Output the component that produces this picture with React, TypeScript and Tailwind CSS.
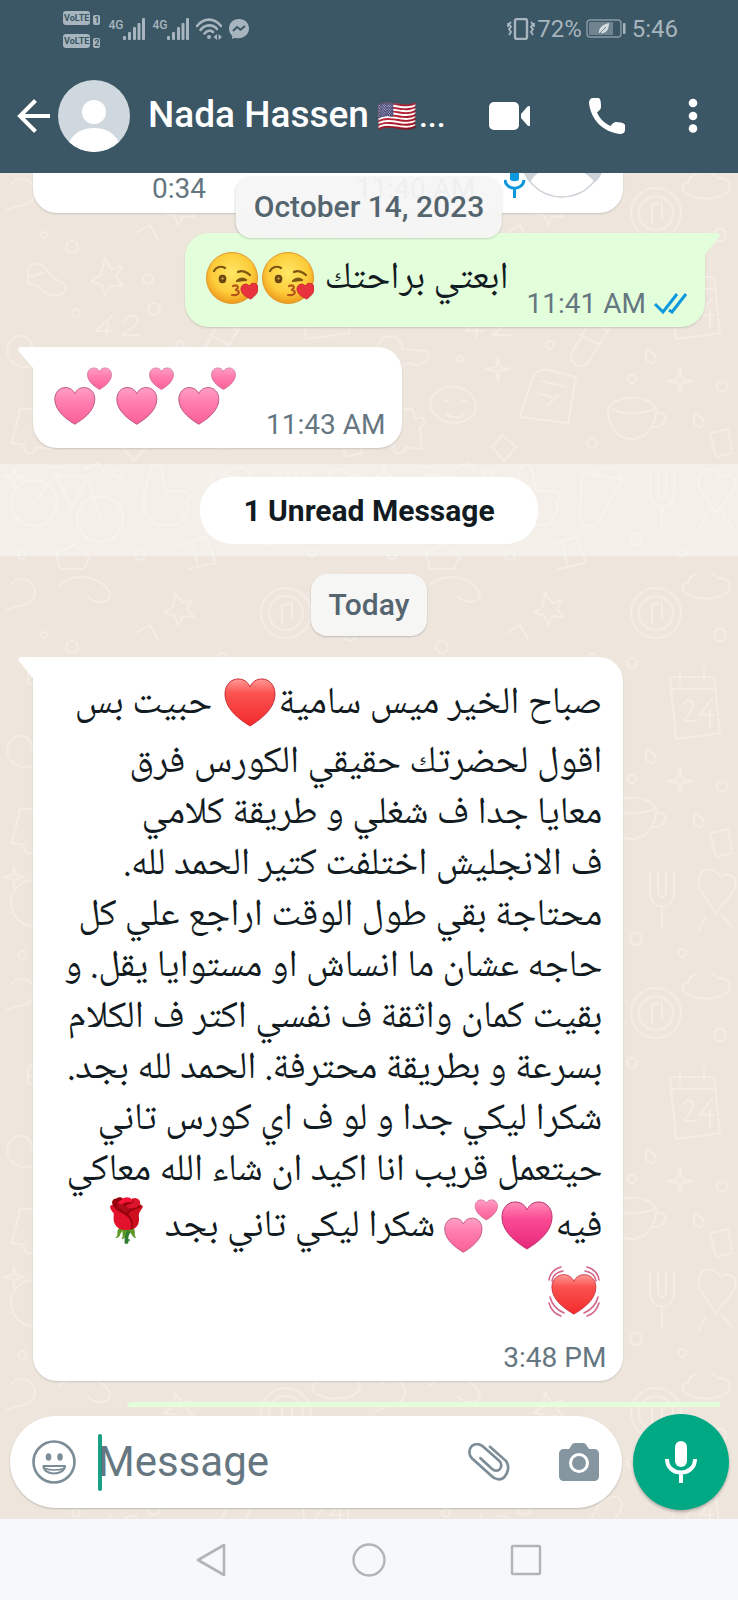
import React from 'react';

type IconProps = {
    className?: string;
};

type HeartTone = "red" | "pink";

const HEART = "M26 49C18 44 1 33 1 17C1 8 7 2 14 2C20 2 24 5 26 10C28 5 32 2 38 2C45 2 51 8 51 17C51 33 34 44 26 49Z";

const HEART_FILL: Record<HeartTone, string> = {
    red: "url(#heart-red)",
    pink: "url(#heart-pink)",
};

const HEART_EDGE: Record<HeartTone, string> = {
    red: "#c9303c",
    pink: "#c0306f",
};

// shared gradients for the emoji drawings
const Gradients = () => (
    <svg width="0" height="0" className="absolute" aria-hidden="true">
        <defs>
            <linearGradient id="heart-red" x1="0" y1="0" x2="0" y2="1">
                <stop offset="0" stopColor="#ff9a96" />
                <stop offset="0.3" stopColor="#fb5350" />
                <stop offset="1" stopColor="#f22a2c" />
            </linearGradient>
            <linearGradient id="heart-pink" x1="0" y1="0" x2="0" y2="1">
                <stop offset="0" stopColor="#ff8db8" />
                <stop offset="0.35" stopColor="#fc4c95" />
                <stop offset="1" stopColor="#e5287a" />
            </linearGradient>
            <linearGradient id="heart-light" x1="0" y1="0" x2="0" y2="1">
                <stop offset="0" stopColor="#ff9fc4" />
                <stop offset="0.4" stopColor="#ff7db0" />
                <stop offset="1" stopColor="#fa6096" />
            </linearGradient>
            <radialGradient id="face" cx="0.5" cy="0.4" r="0.6">
                <stop offset="0" stopColor="#ffe766" />
                <stop offset="0.65" stopColor="#fdcc3a" />
                <stop offset="1" stopColor="#ee9a1c" />
            </radialGradient>
        </defs>
    </svg>
);

const Heart: React.FC<{ tone: HeartTone; label: string }> = ({ tone, label }) => (
    <svg viewBox="0 0 52 52" className="mx-[3px] inline-block size-[52px] align-middle" role="img" aria-label={label}>
        <path d={HEART} fill={HEART_FILL[tone]} stroke={HEART_EDGE[tone]} strokeWidth="1" />
    </svg>
);

const TwoHearts: React.FC<IconProps> = ({ className }) => (
    <svg viewBox="0 0 58 58" className={className} role="img" aria-label="two hearts">
        <g stroke="#b9557c" strokeWidth="1.2">
            <path transform="translate(0 19) scale(.8 .78)" d={HEART} fill="url(#heart-light)" />
            <path transform="translate(33 0) scale(.48 .46)" d={HEART} fill="url(#heart-light)" />
        </g>
    </svg>
);

const BeatingHeart = () => (
    <svg viewBox="0 0 52 52" className="mr-[2px] inline-block size-[52px] align-middle" role="img" aria-label="beating heart">
        <path transform="translate(3 7) scale(.88 .84)" d={HEART} fill="url(#heart-red)" stroke="#c9303c" />
        <g fill="none" stroke="#d4668a" strokeWidth="1.6" strokeLinecap="round">
            <path d="M1 14C2 7 6 3 13 1M4 15C5 9 9 6 15 5M51 14C50 7 46 3 39 1M48 15C47 9 43 6 37 5" />
            <path d="M1 37C3 44 7 48 13 50M2 31C4 39 9 44 16 47M51 37C49 44 45 48 39 50M50 31C48 39 43 44 36 47" />
        </g>
    </svg>
);

const KissFace = () => (
    <svg viewBox="0 0 52 52" className="mx-[2px] inline-block size-[52px] align-middle" role="img" aria-label="face blowing a kiss">
        <circle cx="26" cy="26" r="25.5" fill="url(#face)" stroke="#e09a2b" strokeWidth="1" />
        <g fill="none" stroke="#7d5513" strokeWidth="2.200" strokeLinecap="round">
            <path d="M8 19C10 15 15 13.500 19 16" />
            <path d="M32 20C36 18 41 20 44 23" />
            <path d="M31 29C34 26 37 26 40 28M31 29L39 28" />
            <path d="M27 34C32 32 34 37 29 38C35 38 34 44 26 43" stroke="#b4571d" />
        </g>
        <ellipse cx="16.500" cy="27" rx="3.800" ry="4.200" fill="#6b4410" />
        <circle cx="16.500" cy="26.500" r="1.200" fill="#c79b4f" />
        <path transform="translate(34 32) rotate(-6) scale(.35 .33)" d={HEART} fill="#e8333c" stroke="#b91f2b" strokeWidth="2" />
    </svg>
);

const Signal: React.FC = () => (
    <div className="flex items-start">
        <span className="text-[12px] leading-[14px] font-medium">4G</span>
        <svg viewBox="0 0 22 22" className="h-[22px] w-[22px]" fill="currentColor" aria-hidden="true">
            <rect x="0" y="18" width="3" height="4" rx="1" />
            <rect x="5" y="14" width="3" height="8" rx="1" />
            <rect x="10" y="9" width="3" height="13" rx="1" />
            <rect x="14.500" y="5" width="3" height="17" rx="1" />
            <rect x="19" y="0" width="3" height="22" rx="1" />
        </svg>
    </div>
);

const Volte: React.FC<{ sim: number }> = ({ sim }) => (
    <div className="flex items-end gap-[3px]">
        <span className="h-[14px] rounded-[3px] bg-[#a7b6be] px-px text-[9px] leading-[14px] font-bold text-[#3b5664]">VoLTE</span>
        <span className="h-[10px] rounded-[2px] bg-[#a7b6be] px-px text-[9px] leading-[10px] font-bold text-[#3b5664]">{sim}</span>
    </div>
);

const StatusBar = () => (
    <div className="flex h-[58px] items-center pr-[60px] pl-[63px] text-[#a7b6be]">
        <div className="flex flex-col gap-[9px]">
            <Volte sim={1} />
            <Volte sim={2} />
        </div>
        <div className="ml-2 flex items-center gap-[7px]">
            <Signal />
            <Signal />
            <svg viewBox="0 0 26 22" className="h-[22px] w-[26px]" fill="none" stroke="currentColor" strokeWidth="2.600" aria-hidden="true">
                <path d="M1 8C8 -0.500 18 -0.500 25 8M4.500 12C9 6 17 6 21 11M8.500 15.500C11 12 15 12 17 14" strokeLinecap="round" />
                <circle cx="13" cy="19" r="2" fill="currentColor" stroke="none" />
                <path d="M21 16V22L17.500 19ZM22.500 16V22L26 19Z" fill="currentColor" stroke="none" />
            </svg>
            <svg viewBox="0 0 20 20" className="size-5" aria-hidden="true">
                <path fill="currentColor" d="M10 0C4 0 0 4.200 0 9.600C0 12.500 1.200 15 3.200 16.700V20L6 18.700C13 20.800 20 16.500 20 9.600C20 4.200 16 0 10 0Z" />
                <path d="M4 12L8 8L11.500 10.800L16 7" fill="none" stroke="#3b5664" strokeWidth="2" />
            </svg>
        </div>
        <div className="ml-auto flex items-center">
            <svg viewBox="0 0 28 22" className="h-[22px] w-[28px]" fill="none" stroke="currentColor" strokeWidth="2" aria-hidden="true">
                <rect x="8" y="1" width="12" height="20" rx="2" strokeWidth="2.400" />
                <path d="M4 4L2 6L4 9L2 11L4 14L2 17M24 4L26 6L24 9L26 11L24 14L26 17M1 5V9M27 5V9" strokeWidth="1.800" />
            </svg>
            <span className="ml-[2px] text-[24px] leading-7">72%</span>
            <svg viewBox="0 0 40 20" className="ml-1 h-5 w-10" aria-hidden="true">
                <rect x="1" y="1" width="34" height="17" rx="3" fill="none" stroke="#8a9ba4" strokeWidth="1.400" />
                <rect x="3" y="3" width="24" height="13" fill="#70848f" />
                <path d="M13 15C12 8 18 5 23 4C23 11 20 15 14 14Z" fill="#d4dce0" />
                <path d="M12 16L20 8" stroke="#70848f" />
                <rect x="37" y="4" width="2.500" height="11" rx="1" fill="currentColor" />
            </svg>
            <span className="ml-[6px] text-[24px] leading-7">5:46</span>
        </div>
    </div>
);

const AppBar = () => (
    <div className="flex h-[115px] items-center pr-[41px] pl-[17px] text-white">
        <button type="button" aria-label="Back">
            <svg viewBox="0 0 33 34" className="h-[34px] w-[33px]" fill="none" stroke="currentColor" strokeWidth="4">
                <path d="M33 17H3M18.500 1.500L3 17L18.500 32.500" />
            </svg>
        </button>
        <svg viewBox="0 0 72 72" className="ml-2 size-[72px] shrink-0" role="img" aria-label="Profile photo">
            <clipPath id="avatar"><circle cx="36" cy="36" r="36" /></clipPath>
            <g clipPath="url(#avatar)">
                <rect width="72" height="72" fill="#d0d8df" />
                <circle cx="36" cy="32" r="12" fill="#fff" />
                <path d="M10 64C16 52 25 48 36 48C47 48 56 52 62 64V76H10Z" fill="#fff" />
            </g>
        </svg>
        <h1 className="ml-[18px] flex items-baseline text-[37px] leading-10 font-medium whitespace-nowrap">
            Nada Hassen<span className="ml-2 text-[32px]">🇺🇸</span><span className="ml-[2px] text-[32px]">...</span>
        </h1>
        <div className="ml-auto flex items-center">
            <button type="button" aria-label="Video call">
                <svg viewBox="0 0 42 28" className="h-[28px] w-[42px]" fill="currentColor">
                    <rect x="0" y="0" width="30" height="28" rx="5" />
                    <path d="M32 12L38.500 4.500C40 3.500 41 4 41 5V23C41 24 40 24.500 38.500 23.500L32 16Z" />
                </svg>
            </button>
            <button type="button" aria-label="Voice call" className="ml-[58px]">
                <svg viewBox="0 0 36 36" className="size-9" fill="currentColor">
                    <path d="M4 0H9C11 0 12 2 12 9C12 11 10.500 12.500 8 14.500C11 21 15 25 21.500 28C24 25 25 24 27 24C34 24.500 36 25.500 36 27.500V32C36 34.500 34 36 31 36C14 34 2 22 0 5C0 2 1.500 0 4 0Z" />
                </svg>
            </button>
            <button type="button" aria-label="More options" className="ml-[64px]">
                <svg viewBox="0 0 8 34" className="h-[34px] w-2 overflow-visible" fill="currentColor">
                    <circle cx="4" cy="4" r="4.300" />
                    <circle cx="4" cy="17" r="4.300" />
                    <circle cx="4" cy="29.500" r="4.300" />
                </svg>
            </button>
        </div>
    </div>
);

// doodle wallpaper behind the conversation
const Wallpaper = () => (
    <svg className="absolute inset-0 -z-10 h-full w-full" aria-hidden="true">
        <defs>
            <pattern id="doodles" width="370" height="400" patternUnits="userSpaceOnUse">
                <g fill="none" stroke="#f4ede5" strokeWidth="2" strokeLinecap="round" strokeLinejoin="round">
                    <path d="M105 85L111 96L122 93L116 104L123 113L111 113L105 123L102 112L91 108L101 102Z" />
                    <path d="M28 96C34 88 44 90 48 99C55 110 68 108 66 116C62 126 46 124 40 114L28 110ZM30 104L44 100" />
                    <path d="M112 143L96 158H112M108 150L106 164M123 148C130 138 142 144 136 152L122 162H140" />
                    <path d="M12 10C24 0 38 10 34 24C30 34 14 32 6 38M60 12C76 -2 102 4 110 20C112 30 98 32 88 24" />
                    <path d="M175 20L182 30L192 27L187 36L194 44L183 43L178 52L174 42L164 40L173 34Z" />
                    <path d="M8 172C16 156 34 164 32 176L58 178C62 186 52 196 38 190C22 200 4 190 8 172Z" />
                    <path d="M230 130C246 118 256 126 250 138L218 190C210 198 198 190 202 180ZM218 146L238 158M210 162L230 172" />
                    <path d="M164 200L176 196L206 204L198 250L150 244ZM172 208L196 214M168 220L182 224M178 232L188 222" />
                    <circle cx="286" cy="40" r="25" />
                    <circle cx="286" cy="40" r="17" />
                    <path d="M282 50V32L292 30V46" />
                    <path d="M300 104H344L350 160L306 166ZM300 116H346M310 98V110M334 96V108" />
                    <path d="M313 132C318 124 326 128 322 136L314 148H326M342 126L330 142H344M340 136V154" />
                    <path d="M238 236C242 222 280 220 286 236C286 256 274 266 262 266C248 266 238 254 238 236ZM286 240C298 236 300 254 282 254M242 236C254 242 272 242 284 236" />
                    <path d="M60 230C66 206 104 210 106 232C106 256 62 256 60 230ZM74 228H78M92 228H96M76 240C82 246 90 246 94 240" />
                    <path d="M20 236H42L46 246C54 240 58 252 50 254L52 276L36 274C34 284 22 282 24 272L12 270Z" />
                    <circle cx="34" cy="330" r="23" />
                    <circle cx="100" cy="346" r="23" />
                    <path d="M34 330L56 302L88 304L100 346M56 302L72 336L88 304M50 294H62M84 296L98 290L104 298" />
                    <path d="M150 300C150 290 160 288 162 298L166 318H184C192 320 190 328 186 330C190 336 186 342 182 342C184 348 180 352 174 352H156L144 340V320Z" />
                    <path d="M212 300L252 306L228 350C222 356 212 352 210 346ZM222 304C232 288 252 294 250 306" />
                    <path d="M280 300V320C280 338 304 338 304 320V300M288 300V318C288 326 296 326 296 318V300M292 334V356" />
                    <path d="M330 316C322 296 344 290 350 304C360 296 372 308 362 320L346 340ZM336 344L328 358M352 342L362 354" />
                    <path d="M180 372L206 364L216 390L188 396M192 368L198 394M56 380L74 372L90 384L84 396H60Z" />
                    <path d="M128 184L130 194L140 196L130 198L128 208L126 198L116 196L126 194ZM310 196L312 206L322 208L312 210L310 220L308 210L298 208L308 206ZM14 294L16 302L24 304L16 306L14 314L12 306L4 304L12 302Z" />
                    <path d="M278 176C270 190 286 194 286 186C286 182 282 180 278 176ZM196 92C188 106 204 110 204 102C204 98 200 96 196 92ZM326 240C318 254 334 258 334 250C334 246 330 244 326 240Z" />
                    <path d="M318 10C310 8 312 22 320 22C328 28 350 26 356 20C366 14 356 2 348 6C342 -6 320 -2 318 10Z" />
                    <path d="M340 260L358 256L362 280L346 284ZM136 60L150 52L158 66M132 262L146 274L134 288L122 274Z" />
                    <circle cx="72" cy="74" r="6" />
                    <circle cx="148" cy="106" r="5" />
                    <circle cx="76" cy="140" r="4" />
                    <circle cx="44" cy="62" r="3" />
                    <circle cx="154" cy="136" r="6" />
                    <circle cx="262" cy="90" r="5" />
                    <circle cx="222" cy="84" r="4" />
                    <circle cx="350" cy="62" r="6" />
                    <circle cx="180" cy="172" r="4" />
                    <circle cx="262" cy="206" r="4" />
                    <circle cx="222" cy="270" r="5" />
                    <circle cx="118" cy="300" r="4" />
                    <circle cx="266" cy="366" r="6" />
                    <circle cx="312" cy="380" r="4" />
                    <circle cx="140" cy="382" r="5" />
                    <circle cx="22" cy="382" r="4" />
                    <circle cx="90" cy="186" r="3" />
                    <circle cx="352" cy="214" r="5" />
                </g>
            </pattern>
        </defs>
        <rect width="100%" height="100%" fill="#eee6dd" />
        <rect width="100%" height="100%" fill="url(#doodles)" />
    </svg>
);

const Tail: React.FC<{ side: "left" | "right" }> = ({ side }) => (
    <svg
        viewBox="0 0 16 24"
        className={side === "left" ? "absolute top-0 -left-[15px] h-6 w-4 text-white" : "absolute top-0 -right-[15px] h-6 w-4 -scale-x-100 text-[#e3fedb]"}
        fill="currentColor"
        aria-hidden="true"
    >
        <path d="M16 0H3C0 0 -0.500 3 1.500 5L15 21H16Z" />
    </svg>
);

const Mic: React.FC<IconProps> = ({ className }) => (
    <svg viewBox="0 0 32 44" className={className} aria-hidden="true">
        <rect x="10" y="1" width="12" height="26" rx="6" fill="currentColor" />
        <path d="M2 19C2 37 30 37 30 19M16 33V43" fill="none" stroke="currentColor" strokeWidth="4" />
    </svg>
);

const messageLines: string[] = [
    "اقول لحضرتك حقيقي الكورس فرق",
    "معايا جدا ف شغلي و طريقة كلامي",
    "ف الانجليش اختلفت كتير الحمد لله.",
    "محتاجة بقي طول الوقت اراجع علي كل",
    "حاجه عشان ما انساش او مستوايا يقل. و",
    "بقيت كمان واثقة ف نفسي اكتر ف الكلام",
    "بسرعة و بطريقة محترفة. الحمد لله بجد.",
    "شكرا ليكي جدا و لو ف اي كورس تاني",
    "حيتعمل قريب انا اكيد ان شاء الله معاكي",
];

const Chat = () => (
    <main className="relative isolate flex flex-1 flex-col overflow-hidden">
        <Wallpaper />

        <div className="ml-[33px] flex h-10 w-4/5 items-start rounded-b-[24px] bg-white pl-[119px] text-[28px] leading-8 text-[#667781] shadow-[0_1px_2px_rgba(0,0,0,0.15)]">
            <span>0:34</span>
            <span className="ml-[150px]">11:40 AM</span>
            <svg viewBox="0 0 100 26" className="ml-[29px] h-[26px] w-[100px]" aria-hidden="true">
                <circle cx="58" cy="-17" r="41" fill="#fff" stroke="#ccd2d8" strokeWidth="1.500" />
                <path d="M20 0H34C30 3 28 6 26 9ZM80 0H98C96 4 94 7 91 9C88 6 84 2 80 0Z" fill="#ccd2d8" />
                <path d="M6 0H15V6C15 9 6 9 6 6Z" fill="#0d98dd" />
                <path d="M1 7C2 18 19 18 20 7M10.500 15V25" fill="none" stroke="#0d98dd" strokeWidth="3" />
            </svg>
        </div>
        <div className="absolute top-[3px] left-1/2 z-10 -translate-x-1/2 rounded-[16px] bg-[#f6f6f6]/95 px-[18px] py-[11px] text-[30px] leading-10 font-medium whitespace-nowrap text-[#54656f] shadow-[0_1px_2px_rgba(0,0,0,0.15)]">
            October 14, 2023
        </div>

        <div className="relative mt-5 mr-[33px] flex h-[94px] self-end rounded-[24px] rounded-tr-none bg-[#e3fedb] pr-[17px] pl-[19px] shadow-[0_1px_2px_rgba(0,0,0,0.15)]">
            <Tail side="right" />
            <p dir="rtl" className="font-['Noto_Naskh_Arabic','Noto_Sans_Arabic',sans-serif] text-[38px] leading-[94px] whitespace-nowrap text-[#111b21]">
                ابعتي براحتك <KissFace /><KissFace />
            </p>
            <div className="mb-[7px] ml-[18px] flex items-center gap-2 self-end text-[28px] leading-8 text-[#667781]">
                11:41 AM
                <svg viewBox="0 0 34 22" className="h-[22px] w-[34px]" fill="none" stroke="#0d98dd" strokeWidth="3" role="img" aria-label="Read">
                    <path d="M1 11L9 19L23 1M15 17L18 19L32 1" />
                </svg>
            </div>
        </div>

        <div className="relative mt-5 ml-[33px] flex h-[101px] self-start rounded-[24px] rounded-tl-none bg-white pt-5 pr-[17px] pl-[21px] shadow-[0_1px_2px_rgba(0,0,0,0.15)]">
            <Tail side="left" />
            <div className="flex gap-1">
                <TwoHearts className="size-[58px]" />
                <TwoHearts className="size-[58px]" />
                <TwoHearts className="size-[58px]" />
            </div>
            <span className="mb-[7px] ml-[30px] self-end text-[28px] leading-8 text-[#667781]">11:43 AM</span>
        </div>

        <div className="mt-4 flex h-[92px] items-center justify-center bg-[#f9f9f5]/50">
            <div className="rounded-[32px] bg-white px-[43px] py-[13px] text-[30px] leading-[41px] font-bold text-[#111b21]">1 Unread Message</div>
        </div>

        <div className="mt-[18px] self-center rounded-[16px] bg-[#f6f6f5] px-[18px] py-[11px] text-[30px] leading-10 font-medium text-[#54656f] shadow-[0_1px_2px_rgba(0,0,0,0.2)]">Today</div>

        <div className="relative mt-[21px] ml-[33px] w-4/5 rounded-[24px] rounded-tl-none bg-white px-[17px] pt-[15px] pb-[7px] shadow-[0_1px_2px_rgba(0,0,0,0.15)]">
            <Tail side="left" />
            <div dir="rtl" className="pr-1 font-['Noto_Naskh_Arabic','Noto_Sans_Arabic',sans-serif] text-[38px] leading-[51px] whitespace-nowrap text-[#111b21]">
                <p className="leading-[66px]">صباح الخير ميس سامية<Heart tone="red" label="red heart" /> حبيت بس</p>
                {messageLines.map((line) => (
                    <p key={line}>{line}</p>
                ))}
                <p className="leading-[62px]">
                    فيه<Heart tone="pink" label="pink heart" />
                    <TwoHearts className="inline-block size-[54px] align-middle" /> شكرا ليكي تاني بجد <span className="mr-1 inline-block align-middle text-[42px] leading-[52px]">🌹</span>
                </p>
                <p className="leading-[70px]"><BeatingHeart /></p>
            </div>
            <div className="mt-[13px] text-right text-[28px] leading-8 text-[#667781]">3:48 PM</div>
        </div>

        <div className="mt-[21px] mr-[18px] ml-[127px] h-[5px] rounded-tl-[5px] bg-[#e3fedb]" />

        <form className="mt-[7px] flex items-center gap-[11px] pr-[9px] pb-[9px] pl-[10px]">
            <div className="flex h-[92px] min-w-0 flex-1 items-center rounded-full bg-white pr-[23px] pl-[22px] shadow-[0_1px_2px_rgba(0,0,0,0.2)]">
                <button type="button" aria-label="Emoji">
                    <svg viewBox="0 0 44 44" className="size-11 text-[#7c8d98]" fill="none" stroke="currentColor">
                        <circle cx="22" cy="22" r="20.500" strokeWidth="2.600" />
                        <ellipse cx="16.500" cy="17" rx="2.800" ry="3.800" fill="currentColor" stroke="none" />
                        <ellipse cx="28" cy="17" rx="2.800" ry="3.800" fill="currentColor" stroke="none" />
                        <path d="M11.500 26H33C32 36 12 36 11.500 26Z" strokeWidth="2.200" strokeLinejoin="round" />
                        <path d="M13 28.500C18 30.500 27 30.500 32 28.500" strokeWidth="1.600" />
                    </svg>
                </button>
                <span className="ml-[22px] h-[57px] w-1 shrink-0 rounded-full bg-[#1aa085]" />
                <input
                    type="text"
                    aria-label="Message"
                    placeholder="Message"
                    className="-ml-1 min-w-0 flex-1 text-[42px] leading-[52px] text-[#111b21] outline-none placeholder:text-[#667781]"
                />
                <button type="button" aria-label="Attach">
                    <svg viewBox="0 0 44 40" className="h-[38px] w-[42px] text-[#7c8d98]" fill="none" stroke="currentColor" strokeWidth="2.800" strokeLinecap="round">
                        <path d="M23 4L40 19C44 24 42 32 38 36C34 40 28 38 25 35L4 16C0 12 1 6 4 3C8 0 13 1 16 4L33 19C36 22 35 26 33 28C30 30 27 29 25 27L13 16" />
                    </svg>
                </button>
                <button type="button" aria-label="Camera" className="ml-[49px]">
                    <svg viewBox="0 0 40 38" className="h-[38px] w-10">
                        <path fill="#8696a0" d="M12 3C13 1 14 0 16 0H24C26 0 27 1 28 3L30 6H35C38 6 40 8 40 11V33C40 36 38 38 35 38H5C2 38 0 36 0 33V11C0 8 2 6 5 6H10Z" />
                        <circle cx="20" cy="20" r="8.500" fill="none" stroke="#fff" strokeWidth="3" />
                    </svg>
                </button>
            </div>
            <button type="button" aria-label="Record voice message" className="flex size-24 shrink-0 items-center justify-center rounded-full bg-[#00a884] text-white shadow-[0_2px_3px_rgba(0,0,0,0.25)]">
                <Mic className="h-11 w-8" />
            </button>
        </form>
    </main>
);

const NavBar = () => (
    <nav className="flex h-[81px] items-center justify-center gap-[124px] bg-[#f6f8fa] text-[#b2b5b8]">
        <button type="button" aria-label="Back">
            <svg viewBox="0 0 34 34" className="size-[34px]" fill="none" stroke="currentColor" strokeWidth="2.600" strokeLinejoin="round">
                <path d="M30 2V32L4 17Z" />
            </svg>
        </button>
        <button type="button" aria-label="Home">
            <svg viewBox="0 0 34 34" className="size-[34px]" fill="none" stroke="currentColor" strokeWidth="2.400">
                <circle cx="17" cy="17" r="15.500" />
            </svg>
        </button>
        <button type="button" aria-label="Recent apps">
            <svg viewBox="0 0 34 34" className="size-[34px]" fill="none" stroke="currentColor" strokeWidth="2.400">
                <rect x="2" y="3" width="28" height="28" rx="1" />
            </svg>
        </button>
    </nav>
);

const App: React.FC = () => (
    <div className="flex min-h-screen flex-col font-[Roboto,sans-serif]">
        <Gradients />
        <header className="bg-[#3b5664]">
            <StatusBar />
            <AppBar />
        </header>
        <Chat />
        <NavBar />
    </div>
);

export default App;
